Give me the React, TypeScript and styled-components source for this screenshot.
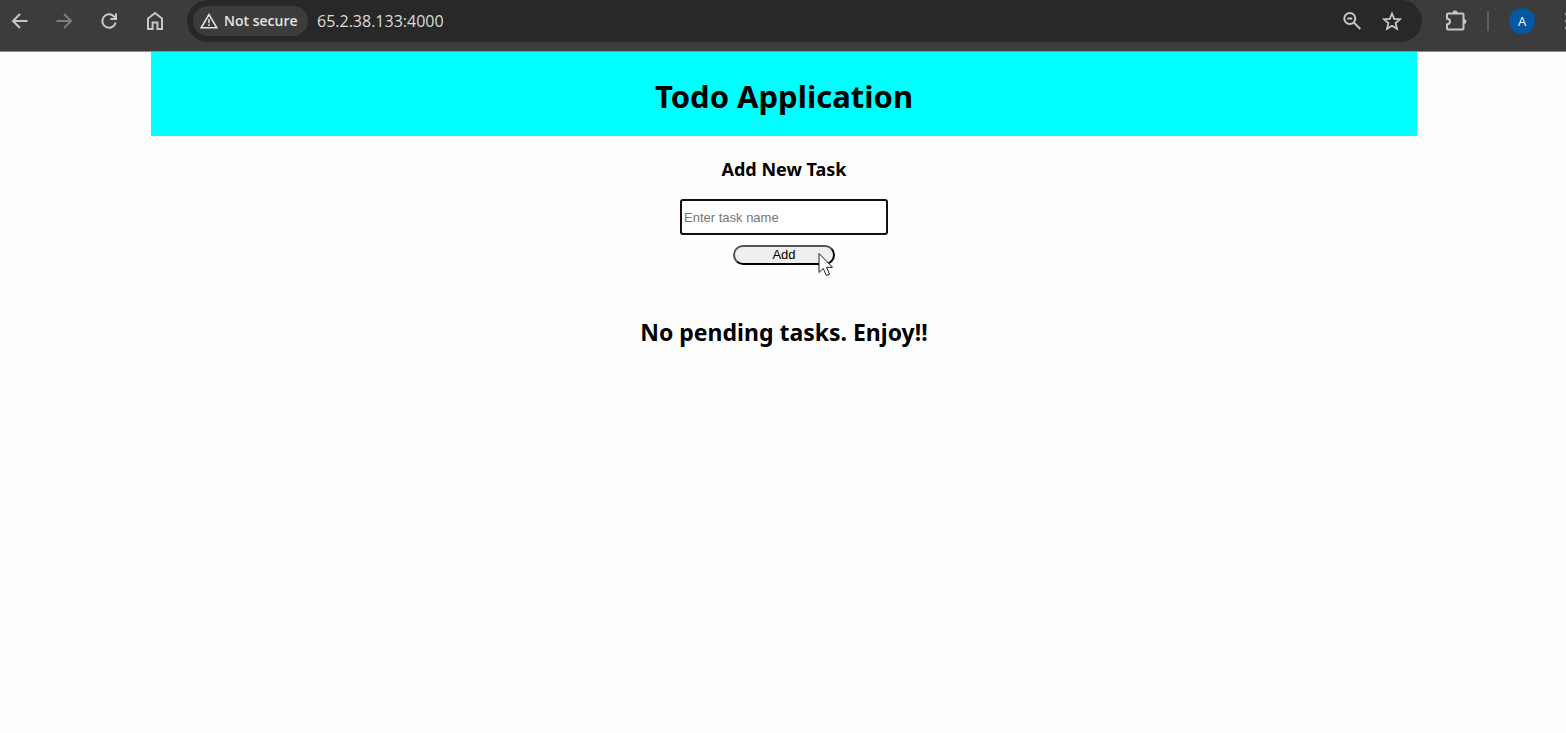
import React from "react";
import styled, { createGlobalStyle } from "styled-components";

const GlobalStyle = createGlobalStyle`
  * { box-sizing: border-box; }
  body {
    margin: 0;
    background: #fefefe;
    color: #000;
    font-family: "Noto Sans", "Open Sans", sans-serif;
    overflow-x: hidden;
  }
`;

const Toolbar = styled.header`
  display: flex;
  align-items: flex-start;
  height: 52px;
  background: #3c3c3c;
  border-bottom: 1px solid #8c8c8c;
  overflow: hidden;
`;

const IconButton = styled.button<{ $width: number; $dim?: boolean }>`
  display: flex;
  flex: none;
  align-items: center;
  justify-content: center;
  width: ${(p) => p.$width}px;
  height: 42px;
  padding: 0;
  border: 0;
  background: none;
  color: ${(p) => (p.$dim ? "#7d7d7d" : "#c7c7c7")};
`;

const NavButtons = styled.nav`
  display: flex;
  flex: none;
  width: 187px;
  padding-right: 10px;
  justify-content: space-between;
`;

const AddressBar = styled.div`
  display: flex;
  flex: 1;
  align-items: center;
  height: 42px;
  padding: 0 10px 0 6px;
  border-radius: 21px;
  background: #282828;
`;

const SecurityChip = styled.button`
  display: flex;
  flex: none;
  align-items: center;
  gap: 6px;
  width: 115px;
  height: 30px;
  padding: 0 0 0 7px;
  border: 0;
  border-radius: 15px;
  background: #3c3c3c;
  color: #e3e3e3;
  font: 600 14px/20px "Open Sans", sans-serif;
  white-space: nowrap;
`;

const Address = styled.input`
  flex: 1;
  min-width: 0;
  height: 30px;
  padding: 0 0 0 9px;
  border: 0;
  outline: 0;
  background: none;
  color: #dcdcdc;
  font: 400 16px/22px "Open Sans", sans-serif;
`;

const ToolbarEnd = styled.div`
  display: flex;
  flex: none;
  align-items: center;
  width: 144px;
  height: 42px;
  padding-left: 14px;
`;

const Divider = styled.span`
  flex: none;
  width: 2px;
  height: 20px;
  margin: 0 20px 0 11px;
  background: #5e5e5e;
`;

const Avatar = styled.button`
  flex: none;
  width: 26px;
  height: 26px;
  padding: 0;
  border: 0;
  border-radius: 50%;
  background: #0457a0;
  color: #fff;
  font: 400 13px/26px "Open Sans", sans-serif;
`;

const MenuButton = styled(IconButton)`
  margin-left: 20px;
`;

const Page = styled.main`
  margin: 0 149px 0 151px;
  text-align: center;
`;

const Banner = styled.div`
  padding: 22px 0 18px;
  background: #00ffff;
`;

const Title = styled.h1`
  margin: 0;
  font-size: 31px;
  line-height: 44px;
`;

const TaskForm = styled.form`
  display: flex;
  flex-direction: column;
  align-items: center;
`;

const FormLabel = styled.label`
  margin: 20px 0 16px;
  font-size: 18px;
  font-weight: 700;
  line-height: 27px;
`;

const TaskInput = styled.input`
  width: 208px;
  height: 36px;
  padding: 1px 2px;
  border: 2px solid #101010;
  border-radius: 3px;
  outline: 0;
  background: #fff;
  font: 400 13px/18px "Liberation Sans", Arial, sans-serif;

  &::placeholder {
    color: #757575;
    opacity: 1;
  }
`;

const ButtonWrap = styled.div`
  position: relative;
  display: flex;
  margin-top: 10px;
`;

const AddButton = styled.button`
  width: 102px;
  height: 20px;
  padding: 0;
  border: 2px outset #000;
  border-radius: 10px;
  background: #efefef;
  color: #000;
  font: 400 13px/16px "Liberation Sans", Arial, sans-serif;
`;

const Pointer = styled.svg`
  position: absolute;
  left: 85px;
  top: 7px;
`;

const EmptyMessage = styled.h2`
  margin: 50px 0 0;
  font-size: 23px;
  line-height: 34px;
`;

const strokeProps = {
  fill: "none",
  stroke: "currentColor",
  strokeWidth: 2,
};

export default function App() {
  return (
    <>
      <GlobalStyle />
      <Toolbar>
        <NavButtons aria-label="Browser navigation">
          <IconButton $width={40} aria-label="Back">
            <svg width="18" height="18" viewBox="0 0 18 18" {...strokeProps}>
              <path d="M16.5 9H2.5M9 2L2 9l7 7" />
            </svg>
          </IconButton>
          <IconButton $width={44} $dim aria-label="Forward">
            <svg width="18" height="18" viewBox="0 0 18 18" {...strokeProps}>
              <path d="M1.500 9h14M9 2l7 7-7 7" />
            </svg>
          </IconButton>
          <IconButton $width={44} aria-label="Reload">
            <svg width="18" height="18" viewBox="0 0 18 18" {...strokeProps}>
              <path d="M15.600 10.500A6.700 6.700 0 1 1 13.800 4.300L15.800 6.300M16 1.500V7H10.300" />
            </svg>
          </IconButton>
          <IconButton $width={44} aria-label="Home">
            <svg width="18" height="20" viewBox="0 0 18 20" {...strokeProps}>
              <path d="M2 7.500L9 2l7 5.500V18h-4.600v-6.400H6.600V18H2z" />
            </svg>
          </IconButton>
        </NavButtons>
        <AddressBar>
          <SecurityChip>
            <svg width="18" height="16" viewBox="0 0 18 16" fill="none" stroke="currentColor" strokeWidth="1.500">
              <path d="M9 1.500L1.200 14.800h15.600z" />
              <path d="M9 6v4.200M9 11.300v1.600" />
            </svg>
            Not secure
          </SecurityChip>
          <Address aria-label="Address" defaultValue="65.2.38.133:4000" />
          <IconButton $width={40} aria-label="Zoom">
            <svg width="20" height="20" viewBox="0 0 20 20" {...strokeProps}>
              <circle cx="7.800" cy="7.500" r="5.500" />
              <path d="M11.900 11.600L18.300 18M5.300 7.500h5" />
            </svg>
          </IconButton>
          <IconButton $width={40} aria-label="Bookmark this page">
            <svg width="20" height="20" viewBox="0 0 20 20" fill="none" stroke="currentColor" strokeWidth="1.800">
              <path d="M10 2.500l2.200 5.300 5.900.5-4.500 3.800 1.400 5.700L10 14.800l-5 3 1.400-5.700L1.900 8.300l5.900-.5z" />
            </svg>
          </IconButton>
        </AddressBar>
        <ToolbarEnd>
          <IconButton $width={40} aria-label="Extensions">
            <svg width="22" height="22" viewBox="0 0 22 22" {...strokeProps}>
              <path d="M3 3.500h14.500q1 0 1 1v14q0 1-1 1H3q-1 0-1-1v-4q3-.4 3-3t-3-3v-4q0-1 1-1z" />
              <path d="M7.500 3a2.600 2.600 0 0 1 5.200 0zM19 9a2.500 2.500 0 0 1 0 5z" fill="currentColor" stroke="none" />
            </svg>
          </IconButton>
          <Divider />
          <Avatar aria-label="Account">A</Avatar>
          <MenuButton $width={24} aria-label="Menu">
            <svg width="4" height="18" viewBox="0 0 4 18" fill="currentColor">
              <circle cx="2" cy="2" r="1.800" />
              <circle cx="2" cy="9" r="1.800" />
              <circle cx="2" cy="16" r="1.800" />
            </svg>
          </MenuButton>
        </ToolbarEnd>
      </Toolbar>
      <Page>
        <Banner>
          <Title>Todo Application</Title>
        </Banner>
        <TaskForm onSubmit={(e) => e.preventDefault()}>
          <FormLabel htmlFor="task">Add New Task</FormLabel>
          <TaskInput id="task" placeholder="Enter task name" />
          <ButtonWrap>
            <AddButton type="submit">Add</AddButton>
            <Pointer width="16" height="26" viewBox="0 0 16 26" aria-hidden="true">
              <path
                d="M1 1.500V20.500L5.300 16.500L8.300 23.500L11.500 22.200L8.500 15.300H14.500z"
                fill="#fff"
                stroke="#1c1c24"
                strokeWidth="1"
              />
            </Pointer>
          </ButtonWrap>
        </TaskForm>
        <EmptyMessage>No pending tasks. Enjoy!!</EmptyMessage>
      </Page>
    </>
  );
}
